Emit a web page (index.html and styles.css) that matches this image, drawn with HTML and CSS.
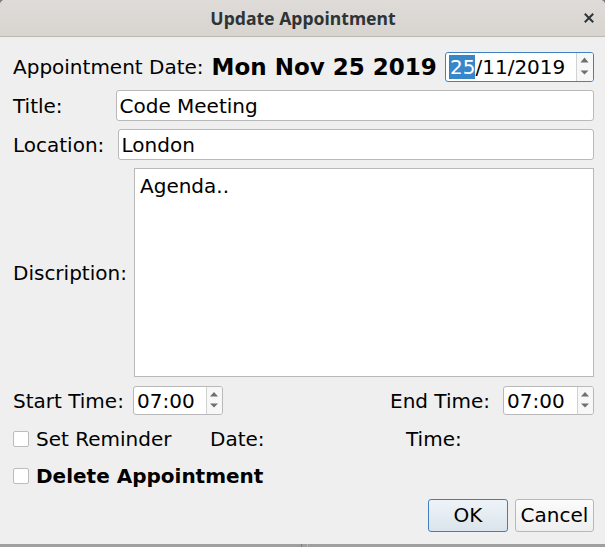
FILE: index.html
```html
<!DOCTYPE html>
<html lang="en">
<head>
<meta charset="utf-8">
<title>Update Appointment</title>
<link rel="stylesheet" href="styles.css">
</head>
<body>
<div class="dialog">
  <div class="titlebar">
    <span class="title">Update Appointment</span>
    <span class="close">
      <svg width="10" height="10" viewBox="0 0 10 10"><path d="M1.5 1.5 L8.5 8.5 M8.5 1.5 L1.5 8.5" stroke="#2e3436" stroke-width="2" stroke-linecap="square"/></svg>
    </span>
  </div>
  <div class="content">
    <div class="row row-date">
      <span class="label">Appointment Date:</span>
      <span class="date-big">Mon Nov 25 2019</span>
      <div class="spinner spinner-date">
        <div class="spin-text"><span class="sel">25</span>/11/2019</div>
        <div class="spin-btns">
          <svg width="16" height="28" viewBox="0 0 16 28"><polygon points="3.5,9.5 7.5,4.5 11.5,9.5" fill="#6f6f6f"/><polygon points="3.5,17.5 7.5,21.5 11.5,17.5" fill="#6f6f6f"/></svg>
        </div>
      </div>
    </div>
    <div class="row row-field">
      <span class="label w-title">Title:</span>
      <div class="field">Code Meeting</div>
    </div>
    <div class="row row-field">
      <span class="label w-loc">Location:</span>
      <div class="field">London</div>
    </div>
    <div class="row row-desc">
      <span class="label w-desc">Discription:</span>
      <div class="textarea">Agenda..</div>
    </div>
    <div class="row row-time">
      <span class="label w-start">Start Time:</span>
      <div class="spinner spinner-time">
        <div class="spin-text">07:00</div>
        <div class="spin-btns">
          <svg width="15" height="27" viewBox="0 0 15 27"><polygon points="3,9.5 7,5 11,9.5" fill="#6f6f6f"/><polygon points="3,16.5 7,20.5 11,16.5" fill="#6f6f6f"/></svg>
        </div>
      </div>
      <span class="label w-end">End Time:</span>
      <div class="spinner spinner-time">
        <div class="spin-text">07:00</div>
        <div class="spin-btns">
          <svg width="15" height="27" viewBox="0 0 15 27"><polygon points="3,9.5 7,5 11,9.5" fill="#6f6f6f"/><polygon points="3,16.5 7,20.5 11,16.5" fill="#6f6f6f"/></svg>
        </div>
      </div>
    </div>
    <div class="row row-check">
      <div class="check-group">
        <span class="checkbox"></span>
        <span class="label">Set Reminder</span>
      </div>
      <span class="label w-date">Date:</span>
      <span class="label">Time:</span>
    </div>
    <div class="row row-check row-delete">
      <div class="check-group">
        <span class="checkbox"></span>
        <span class="label bold">Delete Appointment</span>
      </div>
    </div>
    <div class="row row-buttons">
      <button class="btn btn-default">OK</button>
      <button class="btn">Cancel</button>
    </div>
  </div>
</div>
<div class="under">
  <div class="under-left"></div>
  <div class="under-div"></div>
</div>
</body>
</html>
```
FILE: styles.css
```css
html, body {
  margin: 0;
  padding: 0;
  background: #7d7d7d;
  overflow: hidden;
}
body {
  width: 605px;
  height: 547px;
  font-family: "DejaVu Sans", sans-serif;
  font-size: 20px;
  color: #000;
}
.dialog {
  height: 544px;
  background: #efefef;
  border-radius: 5px 5px 0 0;
  overflow: hidden;
  box-sizing: border-box;
}
.titlebar {
  height: 36px;
  background: linear-gradient(#dedbd8, #d8d5d1);
  border-bottom: 1px solid #bdb8b2;
  display: flex;
  align-items: center;
  justify-content: center;
  position: relative;
}
.title {
  font-family: "Noto Sans", sans-serif;
  font-weight: 700;
  font-size: 17.6px;
  color: #2e3436;
  margin-left: 1px;
}
.close {
  position: absolute;
  right: 11px;
  top: 13px;
  width: 10px;
  height: 10px;
  display: flex;
}
.content {
  padding: 15px 11px 0 13px;
  display: flex;
  flex-direction: column;
}
.row {
  display: flex;
  align-items: center;
}
.label {
  white-space: nowrap;
  flex: none;
}
.bold { font-weight: 700; }
.row-date { height: 30px; }
.date-big {
  font-weight: 700;
  font-size: 23px;
  margin-left: 8px;
  white-space: nowrap;
}
.spinner {
  display: flex;
  box-sizing: border-box;
  border: 1px solid #b9b9b9;
  border-radius: 3px;
  background: #fff;
  overflow: hidden;
}
.spinner-date {
  margin-left: auto;
  width: 149px;
  height: 30px;
  border-color: #3f82c4;
}
.spin-text {
  flex: 1;
  display: flex;
  align-items: center;
  padding-left: 3px;
  white-space: nowrap;
}
.spinner-date .spin-text { padding-left: 4px; }
.sel {
  background: #3786c8;
  color: #fff;
  line-height: 24px;
  border-left: 1px solid #a0643a;
  margin-left: -1px;
}
.spin-btns {
  border-left: 1px solid #d2d2d2;
  background: #f7f7f7;
  display: flex;
}
.row-field { margin-top: 8px; height: 31px; }
.field {
  flex: 1;
  height: 31px;
  box-sizing: border-box;
  border: 1px solid #b9b9b9;
  border-radius: 3px;
  background: #fff;
  display: flex;
  align-items: center;
  padding-left: 2.5px;
}
.w-title { width: 103px; }
.w-loc { width: 105px; }
.w-desc { width: 121px; }
.row-desc { margin-top: 8px; height: 209px; }
.textarea {
  flex: 1;
  height: 209px;
  box-sizing: border-box;
  border: 1px solid #b9b9b9;
  background: #fff;
  padding: 5px 5px;
}
.row-time { margin-top: 9px; height: 29px; }
.spinner-time { width: 90px; height: 29px; }
.w-start { width: 120px; }
.w-end { width: 113px; margin-left: auto; }
.spinner-time:last-child { width: 91px; }
.row-check { margin-top: 16px; height: 16px; }
.row-delete { margin-top: 21px; }
.check-group {
  display: flex;
  align-items: center;
  width: 197px;
  flex: none;
}
.checkbox {
  width: 16px;
  height: 16px;
  box-sizing: border-box;
  border: 1px solid #bcbcbc;
  border-radius: 2px;
  background: #fff;
  margin-right: 7px;
  flex: none;
}
.w-date { width: 196px; }
.row-buttons {
  margin-top: 14.5px;
  height: 33px;
  justify-content: flex-end;
  gap: 7px;
}
.btn {
  font-family: "DejaVu Sans", sans-serif;
  font-size: 20px;
  color: #000;
  height: 33px;
  box-sizing: border-box;
  border: 1px solid #b8b8b8;
  border-radius: 3px;
  background: linear-gradient(#fbfbfb, #efefef);
  padding: 0;
  width: 79px;
}
.btn-default {
  width: 80px;
  border-color: #3f7fbf;
  background: linear-gradient(#eef3f8, #dbe4ec);
}
.under {
  height: 3px;
  background: #9f9f9f;
  display: flex;
}
.under-left { width: 301px; border-right: 1px solid #7e7e7e; }
.under-div { width: 5px; border-right: 1px solid #b8b8b8; }
```
